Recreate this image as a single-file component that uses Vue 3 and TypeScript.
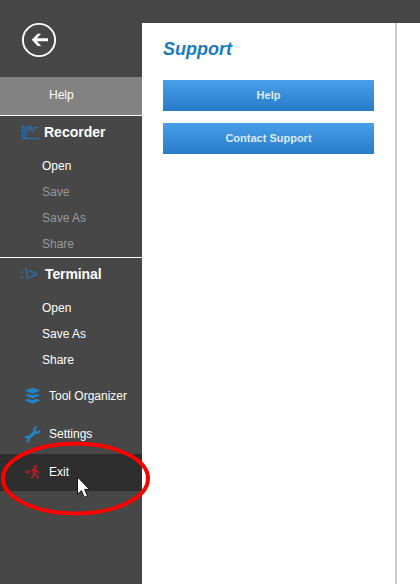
<script setup lang="ts">
interface Entry {
  label: string
  disabled?: boolean
}

const recorderItems: Entry[] = [
  { label: 'Open' },
  { label: 'Save', disabled: true },
  { label: 'Save As', disabled: true },
  { label: 'Share', disabled: true },
]
const terminalItems: Entry[] = [{ label: 'Open' }, { label: 'Save As' }, { label: 'Share' }]
const supportActions: string[] = ['Help', 'Contact Support']
</script>

<template>
  <div class="window">
    <nav class="sidebar">
      <div class="back-area">
        <svg class="back" width="36" height="36" viewBox="0 0 36 36">
          <circle cx="18" cy="18" r="16.1" fill="none" stroke="#fff" stroke-width="1.9" />
          <path d="M10.8 17.8 L16.6 11.7 H20.2 L15.8 16.3 H27 V19.3 H15.8 L20.2 23.9 H16.6 Z" fill="#fff" />
        </svg>
      </div>
      <div class="row help">Help</div>

      <section class="group">
        <h2 class="group-title">
          <svg class="group-icon" width="20" height="18" viewBox="0 0 20 18" fill="none" stroke="#2f6ba3">
            <path d="M2.5 1 V15.5 H19" stroke-width="1.4" />
            <path d="M1 4.5 H4 M1 8.5 H4 M1 12.5 H4" stroke-width=".7" />
            <path d="M4.5 15 V9 L5.5 3.5 H8 L9 8.5 L10.5 2 L12.5 9 L14 4.5 H18" stroke-width="1.2" />
            <path d="M6.8 4 V14 M15.8 4.5 V7" stroke-width=".9" />
          </svg>
          <span>Recorder</span>
        </h2>
        <ul class="items">
          <li v-for="item in recorderItems" :key="item.label" :class="{ disabled: item.disabled }">{{ item.label }}</li>
        </ul>
      </section>

      <section class="group">
        <h2 class="group-title">
          <span class="prompt">:\&gt;</span>
          <span class="terminal-name">Terminal</span>
        </h2>
        <ul class="items">
          <li v-for="item in terminalItems" :key="item.label">{{ item.label }}</li>
        </ul>
      </section>

      <div class="tools">
        <div class="row">
          <svg class="row-icon" width="17" height="18" viewBox="0 0 17 18" fill="#1e86c8">
            <path d="M8.5 .8 L16.2 3.8 L8.5 6.8 L.8 3.8 Z" />
            <path d="M.8 8.2 L4 6.9 L8.5 8.3 L13 6.9 L16.2 8.2 L8.5 11.6 Z" />
            <path d="M.8 13.3 L4 11.8 L8.5 13.2 L13 11.8 L16.2 13.3 L8.5 16.8 Z" />
          </svg>
          <span>Tool Organizer</span>
        </div>
        <div class="row">
          <svg class="row-icon" width="17" height="18" viewBox="0 0 17 18">
            <path
              d="M13.9 1.4 L11.4 4 L12.1 6 L14.2 6.5 L16.5 4.2 C16.8 7.3 14.6 9.3 11.6 8.8 L6.2 13.6 C6.1 16.4 4 17.8 1.2 17.2 L3.5 15 L3 13.2 L1.1 12.8 L.1 13.7 C.2 11.4 2 10.2 4.5 10.8 L9.3 6.4 C8.8 3.2 11 .8 13.9 1.4 Z"
              fill="#1e86c8"
            />
          </svg>
          <span>Settings</span>
        </div>
        <div class="row exit">
          <svg class="row-icon" width="17" height="18" viewBox="0 0 17 18">
            <path d="M1 8.1 H3 V6 L6.8 9.1 L3 12.2 V10.1 H1 Z" fill="#a51b20" />
            <circle cx="11.5" cy="3.5" r="1.6" fill="#b82025" />
            <path
              d="M7.6 8.4 L9.2 6.1 L11.5 6.3 L12.5 8.3 L15.2 9.5 M10.8 6.5 L9.9 10.4 L13 12.5 L14.4 16 M9.9 10.4 L9.2 13 L6.8 15.5"
              fill="none"
              stroke="#b82025"
              stroke-width="1.6"
            />
          </svg>
          <span>Exit</span>
        </div>
      </div>
    </nav>

    <div class="body">
      <main class="support">
        <h1>Support</h1>
        <button v-for="action in supportActions" :key="action" type="button">{{ action }}</button>
      </main>
      <aside class="pane"></aside>
    </div>

    <svg class="overlay" width="420" height="584" viewBox="0 0 420 584">
      <ellipse cx="75.5" cy="478.5" rx="72.5" ry="35" fill="none" stroke="#fe0000" stroke-width="4" />
      <path
        d="M77.5 477 V494.2 L81.4 490.6 L84.3 497.4 L87.5 496 L84.7 489.4 H89.5 Z"
        fill="#fff"
        stroke="#111"
        stroke-width="1"
      />
    </svg>
  </div>
</template>

<style>
body {
  margin: 0;
}
</style>

<style scoped>
.window {
  position: relative;
  display: flex;
  width: 420px;
  height: 584px;
  overflow: hidden;
  background: #474747;
  color: #fff;
  font: 12px/26px 'Liberation Sans', Arial, sans-serif;
}
.sidebar {
  width: 142px;
  flex: none;
}
.back-area {
  box-sizing: border-box;
  height: 77px;
  padding: 22px 0 0 21px;
}
.back {
  display: block;
}
.row {
  display: flex;
  align-items: center;
  box-sizing: border-box;
  height: 38px;
  padding-left: 24px;
}
.row.help {
  padding-left: 49px;
  padding-bottom: 2px;
  background: #828282;
}
.group {
  border-top: 1px solid #fff;
}
.group-title {
  display: flex;
  align-items: center;
  height: 32px;
  margin: 0 0 5px;
  padding-left: 20px;
  font-size: 14px;
  font-weight: bold;
}
.group-icon {
  margin-right: 4px;
}
.prompt {
  width: 25px;
  color: #2f6ba3;
  letter-spacing: 0.5px;
}
.terminal-name {
  letter-spacing: -0.1px;
}
.items {
  margin: 0;
  padding: 0 0 0 42px;
  list-style: none;
}
.items .disabled {
  color: #999;
}
.tools {
  padding-top: 4px;
}
.row-icon {
  margin-right: 8px;
}
.row.exit {
  height: 37px;
  margin-top: 1px;
  padding-bottom: 1px;
  background: #2e2e2e;
}
.body {
  display: flex;
  flex: 1;
  margin-top: 23px;
  background: #fff;
}
.support {
  display: flex;
  flex-direction: column;
  box-sizing: border-box;
  width: 255px;
  padding: 13px 21px 0;
  border-right: 2px solid #cbcbcb;
}
h1 {
  margin: 0 0 18px;
  color: #197bbd;
  font-size: 18px;
  font-style: italic;
  line-height: 26px;
}
button {
  height: 31px;
  margin: 0 0 12px;
  padding: 0 0 1px;
  border: 0;
  background: linear-gradient(#4a9fe9, #277bc8);
  color: #dceaf7;
  font: bold 11px 'Liberation Sans', Arial, sans-serif;
}
.pane {
  flex: 1;
}
.overlay {
  position: absolute;
  inset: 0;
}
</style>
